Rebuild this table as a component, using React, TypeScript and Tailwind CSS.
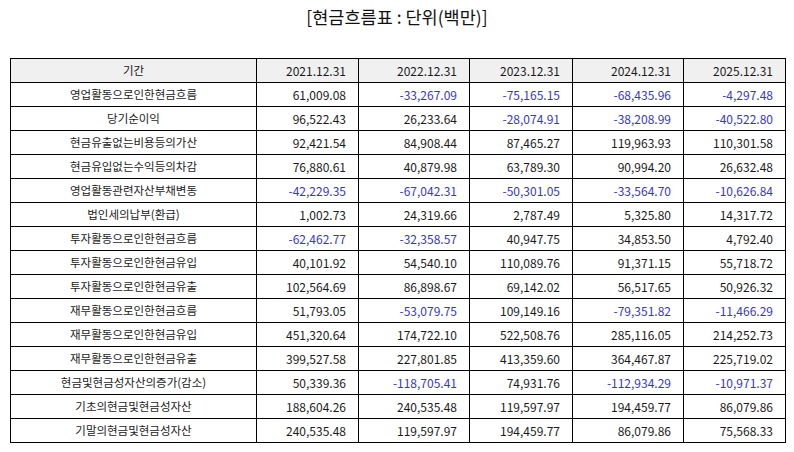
const years = ['2021.12.31', '2022.12.31', '2023.12.31', '2024.12.31', '2025.12.31']

const rows: [string, string[]][] = [
  ['영업활동으로인한현금흐름', ['61,009.08', '-33,267.09', '-75,165.15', '-68,435.96', '-4,297.48']],
  ['당기순이익', ['96,522.43', '26,233.64', '-28,074.91', '-38,208.99', '-40,522.80']],
  ['현금유출없는비용등의가산', ['92,421.54', '84,908.44', '87,465.27', '119,963.93', '110,301.58']],
  ['현금유입없는수익등의차감', ['76,880.61', '40,879.98', '63,789.30', '90,994.20', '26,632.48']],
  ['영업활동관련자산부채변동', ['-42,229.35', '-67,042.31', '-50,301.05', '-33,564.70', '-10,626.84']],
  ['법인세의납부(환급)', ['1,002.73', '24,319.66', '2,787.49', '5,325.80', '14,317.72']],
  ['투자활동으로인한현금흐름', ['-62,462.77', '-32,358.57', '40,947.75', '34,853.50', '4,792.40']],
  ['투자활동으로인한현금유입', ['40,101.92', '54,540.10', '110,089.76', '91,371.15', '55,718.72']],
  ['투자활동으로인한현금유출', ['102,564.69', '86,898.67', '69,142.02', '56,517.65', '50,926.32']],
  ['재무활동으로인한현금흐름', ['51,793.05', '-53,079.75', '109,149.16', '-79,351.82', '-11,466.29']],
  ['재무활동으로인한현금유입', ['451,320.64', '174,722.10', '522,508.76', '285,116.05', '214,252.73']],
  ['재무활동으로인한현금유출', ['399,527.58', '227,801.85', '413,359.60', '364,467.87', '225,719.02']],
  ['현금및현금성자산의증가(감소)', ['50,339.36', '-118,705.41', '74,931.76', '-112,934.29', '-10,971.37']],
  ['기초의현금및현금성자산', ['188,604.26', '240,535.48', '119,597.97', '194,459.77', '86,079.86']],
  ['기말의현금및현금성자산', ['240,535.48', '119,597.97', '194,459.77', '86,079.86', '75,568.33']],
]

const colWidths = ['w-[246px]', 'w-[102px]', 'w-[111px]', 'w-[103px]', 'w-[111px]', 'w-[102px]']

export default function App() {
  return (
    <div className="w-[794px] h-[452px] bg-white text-[#1a1a1a] font-['Noto_Sans_CJK_KR','Noto_Sans',sans-serif]">
      <h1 className="pt-[5px] h-[58px] text-center text-[17.5px] leading-[24px] text-[#111]">
        [현금흐름표 : 단위(백만)]
      </h1>

      <table className="ml-[10px] w-[775px] table-fixed border-collapse">
        <colgroup>
          {colWidths.map((w, i) => (
            <col key={i} className={w} />
          ))}
        </colgroup>
        <thead>
          <tr className="h-[24px] bg-[#f0f0f0]">
            <th className="border-[1.5px] border-black font-normal text-center text-[11.5px]">기간</th>
            {years.map((y) => (
              <th key={y} className="border-[1.5px] border-black font-normal text-right pr-3 text-[12px]">
                {y}
              </th>
            ))}
          </tr>
        </thead>
        <tbody>
          {rows.map(([label, values]) => (
            <tr key={label} className="h-[24px]">
              <td className="border-[1.5px] border-black text-center text-[11.5px]">{label}</td>
              {values.map((v, i) => (
                <td
                  key={i}
                  className={
                    v.startsWith('-')
                      ? 'border-[1.5px] border-black text-right pr-3 text-[12px] text-[#3535d0]'
                      : 'border-[1.5px] border-black text-right pr-3 text-[12px]'
                  }
                >
                  {v}
                </td>
              ))}
            </tr>
          ))}
        </tbody>
      </table>
    </div>
  )
}
